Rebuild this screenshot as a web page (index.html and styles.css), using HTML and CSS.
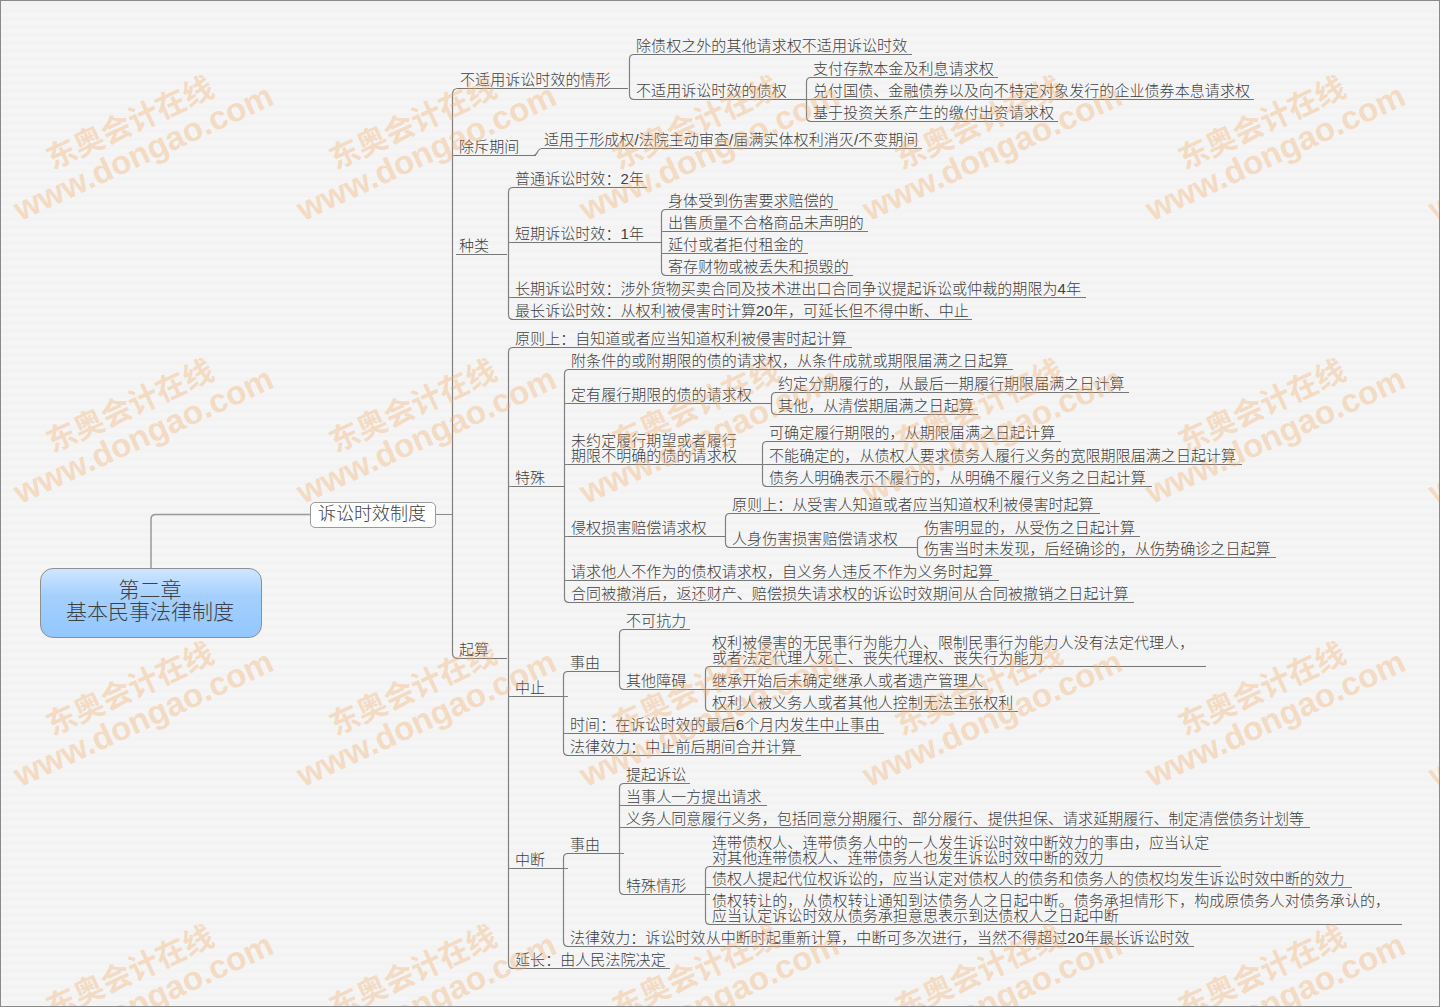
FILE: index.html
```html
<!DOCTYPE html>
<html lang="zh-CN">
<head>
<meta charset="utf-8">
<title>第二章 基本民事法律制度</title>
<link rel="stylesheet" href="styles.css">
</head>
<body>
<main class="canvas">
<svg class="links" width="1440" height="1007" viewBox="0 0 1440 1007" aria-hidden="true">
  <path class="trunk" d="M151 569V519Q151 514.500 156 514.500H310"/>
  <path class="thin" d="M436 514.500H452"/>
  <path class="spine" d="M458 88.500Q452.500 88.500 452.500 94V653Q452.500 658.500 458 658.500"/>
  <path class="spine" d="M634 54.500Q629.500 54.500 629.500 59V94.500Q629.500 99.500 634 99.500"/>
  <path class="spine" d="M811 77.500Q806.500 77.500 806.500 82V116.500Q806.500 121.500 811 121.500M806.500 99.500H811"/>
  <path class="spine" d="M452.500 155.500H533Q536 155.500 537.500 152L538 151Q539.500 148.500 542 148.500"/>
  <path class="spine" d="M513 187.500Q508.500 187.500 508.500 192V314.500Q508.500 319.500 513 319.500M508.500 242.500H513M508.500 297.500H513"/>
  <path class="spine" d="M666 209.500Q661.500 209.500 661.500 214V270.500Q661.500 275.500 666 275.500M661.500 231.500H666M661.500 253.500H666"/>
  <path class="spine" d="M513 347.500Q508.500 347.500 508.500 352V963.500Q508.500 968.500 513 968.500M508.500 486.500H513M508.500 696.500H513M508.500 868.500H513"/>
  <path class="spine" d="M569 369.500Q564.500 369.500 564.500 374V597.500Q564.500 602.500 569 602.500M564.500 403.500H569M564.500 464.500H569M564.500 536.500H569M564.500 580.500H569"/>
  <path class="spine" d="M776 392.500Q771.500 392.500 771.500 397V409.500Q771.500 414.500 776 414.500"/>
  <path class="spine" d="M767 441.500Q762.500 441.500 762.500 446V481.500Q762.500 486.500 767 486.500M762.500 464.500H767"/>
  <path class="spine" d="M730 513.500Q725.500 513.500 725.500 518V542.500Q725.500 547.500 730 547.500"/>
  <path class="spine" d="M922 536.500Q917.500 536.500 917.500 541V552.500Q917.500 557.500 922 557.500"/>
  <path class="spine" d="M568 671.500Q563.500 671.500 563.500 676V750.500Q563.500 755.500 568 755.500M563.500 696.500H568M563.500 733.500H568"/>
  <path class="spine" d="M624 629.500Q619.500 629.500 619.500 634V684.500Q619.500 689.500 624 689.500"/>
  <path class="spine" d="M710 666.500Q705.500 666.500 705.500 671V706.500Q705.500 711.500 710 711.500M705.500 689.500H710"/>
  <path class="spine" d="M568 853.500Q563.500 853.500 563.500 858V941.500Q563.500 946.500 568 946.500M563.500 868.500H568"/>
  <path class="spine" d="M624 783.500Q619.500 783.500 619.500 788V889.500Q619.500 894.500 624 894.500M619.500 805.500H624M619.500 827.500H624M619.500 853.500H624"/>
  <path class="spine" d="M710 866.500Q705.500 866.500 705.500 871V919.500Q705.500 924.500 710 924.500M705.500 887.500H710M705.500 894.500H710"/>
</svg>

<div class="root">第二章<br>基本民事法律制度</div>
<div class="topic">诉讼时效制度</div>

<div class="node" style="left:457px;top:89px;width:171px">不适用诉讼时效的情形</div>
<div class="node" style="left:633px;top:55px;width:279px">除债权之外的其他请求权不适用诉讼时效</div>
<div class="node" style="left:633px;top:100px;width:173px">不适用诉讼时效的债权</div>
<div class="node" style="left:810px;top:78px;width:188px">支付存款本金及利息请求权</div>
<div class="node" style="left:810px;top:100px;width:444px">兑付国债、金融债券以及向不特定对象发行的企业债券本息请求权</div>
<div class="node" style="left:810px;top:122px;width:248px">基于投资关系产生的缴付出资请求权</div>

<div class="node" style="left:456px;top:156px;width:80px">除斥期间</div>
<div class="node" style="left:541px;top:149px;width:381px">适用于形成权/法院主动审查/届满实体权利消灭/不变期间</div>

<div class="node" style="left:456px;top:255px;width:51px">种类</div>
<div class="node" style="left:512px;top:188px;width:135px">普通诉讼时效：2年</div>
<div class="node" style="left:512px;top:243px;width:149px">短期诉讼时效：1年</div>
<div class="node" style="left:665px;top:210px;width:173px">身体受到伤害要求赔偿的</div>
<div class="node" style="left:665px;top:232px;width:203px">出售质量不合格商品未声明的</div>
<div class="node" style="left:665px;top:254px;width:143px">延付或者拒付租金的</div>
<div class="node" style="left:665px;top:276px;width:188px">寄存财物或被丢失和损毁的</div>
<div class="node" style="left:512px;top:298px;width:574px">长期诉讼时效：涉外货物买卖合同及技术进出口合同争议提起诉讼或仲裁的期限为4年</div>
<div class="node" style="left:512px;top:320px;width:460px">最长诉讼时效：从权利被侵害时计算20年，可延长但不得中断、中止</div>

<div class="node" style="left:456px;top:659px;width:51px">起算</div>
<div class="node" style="left:512px;top:348px;width:340px">原则上：自知道或者应当知道权利被侵害时起计算</div>
<div class="node" style="left:512px;top:487px;width:52px">特殊</div>
<div class="node" style="left:568px;top:370px;width:445px">附条件的或附期限的债的请求权，从条件成就或期限届满之日起算</div>
<div class="node" style="left:568px;top:404px;width:203px">定有履行期限的债的请求权</div>
<div class="node" style="left:775px;top:393px;width:354px">约定分期履行的，从最后一期履行期限届满之日计算</div>
<div class="node" style="left:775px;top:415px;width:203px">其他，从清偿期届满之日起算</div>
<div class="node" style="left:568px;top:465px;width:194px">未约定履行期望或者履行<br>期限不明确的债的请求权</div>
<div class="node" style="left:766px;top:442px;width:295px">可确定履行期限的，从期限届满之日起计算</div>
<div class="node" style="left:766px;top:465px;width:476px">不能确定的，从债权人要求债务人履行义务的宽限期限届满之日起计算</div>
<div class="node" style="left:766px;top:487px;width:386px">债务人明确表示不履行的，从明确不履行义务之日起计算</div>
<div class="node" style="left:568px;top:537px;width:157px">侵权损害赔偿请求权</div>
<div class="node" style="left:729px;top:514px;width:371px">原则上：从受害人知道或者应当知道权利被侵害时起算</div>
<div class="node" style="left:729px;top:548px;width:188px">人身伤害损害赔偿请求权</div>
<div class="node" style="left:921px;top:537px;width:219px">伤害明显的，从受伤之日起计算</div>
<div class="node" style="left:921px;top:558px;width:355px">伤害当时未发现，后经确诊的，从伤势确诊之日起算</div>
<div class="node" style="left:568px;top:581px;width:431px">请求他人不作为的债权请求权，自义务人违反不作为义务时起算</div>
<div class="node" style="left:568px;top:603px;width:566px">合同被撤消后，返还财产、赔偿损失请求权的诉讼时效期间从合同被撤销之日起计算</div>

<div class="node" style="left:512px;top:697px;width:51px">中止</div>
<div class="node" style="left:567px;top:672px;width:52px">事由</div>
<div class="node" style="left:623px;top:630px;width:67px">不可抗力</div>
<div class="node" style="left:623px;top:690px;width:82px">其他障碍</div>
<div class="node" style="left:709px;top:667px;width:497px">权利被侵害的无民事行为能力人、限制民事行为能力人没有法定代理人，<br>或者法定代理人死亡、丧失代理权、丧失行为能力</div>
<div class="node" style="left:709px;top:690px;width:279px">继承开始后未确定继承人或者遗产管理人</div>
<div class="node" style="left:709px;top:712px;width:309px">权利人被义务人或者其他人控制无法主张权利</div>
<div class="node" style="left:567px;top:734px;width:317px">时间：在诉讼时效的最后6个月内发生中止事由</div>
<div class="node" style="left:567px;top:756px;width:234px">法律效力：中止前后期间合并计算</div>

<div class="node" style="left:512px;top:869px;width:51px">中断</div>
<div class="node" style="left:567px;top:854px;width:52px">事由</div>
<div class="node" style="left:623px;top:784px;width:67px">提起诉讼</div>
<div class="node" style="left:623px;top:806px;width:144px">当事人一方提出请求</div>
<div class="node" style="left:623px;top:828px;width:687px">义务人同意履行义务，包括同意分期履行、部分履行、提供担保、请求延期履行、制定清偿债务计划等</div>
<div class="node" style="left:623px;top:895px;width:82px">特殊情形</div>
<div class="node" style="left:709px;top:867px;width:512px">连带债权人、连带债务人中的一人发生诉讼时效中断效力的事由，应当认定<br>对其他连带债权人、连带债务人也发生诉讼时效中断的效力</div>
<div class="node" style="left:709px;top:888px;width:643px">债权人提起代位权诉讼的，应当认定对债权人的债务和债务人的债权均发生诉讼时效中断的效力</div>
<div class="node" style="left:709px;top:925px;width:693px">债权转让的，从债权转让通知到达债务人之日起中断。债务承担情形下，构成原债务人对债务承认的，<br>应当认定诉讼时效从债务承担意思表示到达债权人之日起中断</div>
<div class="node" style="left:567px;top:947px;width:627px">法律效力：诉讼时效从中断时起重新计算，中断可多次进行，当然不得超过20年最长诉讼时效</div>
<div class="node" style="left:512px;top:969px;width:158px">延长：由人民法院决定</div>

<div class="marks" aria-hidden="true">
  <div class="mark"><span class="mark-cn">东奥会计在线</span><span class="mark-en">www.dongao.com</span></div>
  <div class="mark"><span class="mark-cn">东奥会计在线</span><span class="mark-en">www.dongao.com</span></div>
  <div class="mark"><span class="mark-cn">东奥会计在线</span><span class="mark-en">www.dongao.com</span></div>
  <div class="mark"><span class="mark-cn">东奥会计在线</span><span class="mark-en">www.dongao.com</span></div>
  <div class="mark"><span class="mark-cn">东奥会计在线</span><span class="mark-en">www.dongao.com</span></div>
  <div class="mark"><span class="mark-cn">东奥会计在线</span><span class="mark-en">www.dongao.com</span></div>
  <div class="mark"><span class="mark-cn">东奥会计在线</span><span class="mark-en">www.dongao.com</span></div>
  <div class="mark"><span class="mark-cn">东奥会计在线</span><span class="mark-en">www.dongao.com</span></div>
  <div class="mark"><span class="mark-cn">东奥会计在线</span><span class="mark-en">www.dongao.com</span></div>
  <div class="mark"><span class="mark-cn">东奥会计在线</span><span class="mark-en">www.dongao.com</span></div>
  <div class="mark"><span class="mark-cn">东奥会计在线</span><span class="mark-en">www.dongao.com</span></div>
  <div class="mark"><span class="mark-cn">东奥会计在线</span><span class="mark-en">www.dongao.com</span></div>
  <div class="mark"><span class="mark-cn">东奥会计在线</span><span class="mark-en">www.dongao.com</span></div>
  <div class="mark"><span class="mark-cn">东奥会计在线</span><span class="mark-en">www.dongao.com</span></div>
  <div class="mark"><span class="mark-cn">东奥会计在线</span><span class="mark-en">www.dongao.com</span></div>
  <div class="mark"><span class="mark-cn">东奥会计在线</span><span class="mark-en">www.dongao.com</span></div>
  <div class="mark"><span class="mark-cn">东奥会计在线</span><span class="mark-en">www.dongao.com</span></div>
  <div class="mark"><span class="mark-cn">东奥会计在线</span><span class="mark-en">www.dongao.com</span></div>
  <div class="mark"><span class="mark-cn">东奥会计在线</span><span class="mark-en">www.dongao.com</span></div>
  <div class="mark"><span class="mark-cn">东奥会计在线</span><span class="mark-en">www.dongao.com</span></div>
  <div class="mark"><span class="mark-cn">东奥会计在线</span><span class="mark-en">www.dongao.com</span></div>
  <div class="mark"><span class="mark-cn">东奥会计在线</span><span class="mark-en">www.dongao.com</span></div>
  <div class="mark"><span class="mark-cn">东奥会计在线</span><span class="mark-en">www.dongao.com</span></div>
  <div class="mark"><span class="mark-cn">东奥会计在线</span><span class="mark-en">www.dongao.com</span></div>
</div>
</main>
</body>
</html>
```
FILE: styles.css
```css
html, body {
  margin: 0;
  padding: 0;
  height: 100%;
  overflow: hidden;
}

.canvas {
  position: relative;
  width: 1440px;
  height: 1007px;
  box-sizing: border-box;
  overflow: hidden;
  background: repeating-linear-gradient(#f3f3f3 0 4px, #f5f5f5 4px 8px);
  border: 1px solid #8a8a8a;
  font-family: "Liberation Sans", "Noto Sans CJK SC", sans-serif;
  font-weight: 300;
  color: #404040;
}

.links {
  position: absolute;
  left: -1px;
  top: -1px;
  fill: none;
}

.spine {
  stroke: #808080;
  stroke-width: 1.2;
  fill: none;
}

.trunk {
  stroke: #999;
  stroke-width: 1.5;
  fill: none;
}

.thin {
  stroke: #8a8a8a;
  stroke-width: 1;
}

.root {
  position: absolute;
  left: 39px;
  top: 567px;
  width: 222px;
  height: 70px;
  box-sizing: border-box;
  padding: 10px 2px 0 0;
  border: 1px solid #8f8f8f;
  border-radius: 13px;
  background: linear-gradient(#cfe6ff 0%, #a5d0fd 40%, #92c7fe 100%);
  font-size: 21px;
  line-height: 22px;
  text-align: center;
}

.topic {
  position: absolute;
  left: 309px;
  top: 501px;
  width: 126px;
  height: 26px;
  box-sizing: border-box;
  padding-right: 2px;
  border: 1px solid #9a9a9a;
  border-radius: 5px;
  background: #fff;
  font-size: 18px;
  line-height: 22px;
  text-align: center;
}

.node {
  position: absolute;
  box-sizing: border-box;
  margin: -1px 0 0 -1px;
  transform: translateY(-100%);
  padding: 0 0 1px 3px;
  border-bottom: 1px solid #777;
  font-size: 15px;
  line-height: 15px;
  letter-spacing: 0.07px;
  white-space: nowrap;
}

.marks {
  position: absolute;
  left: -6px;
  top: -5px;
  display: grid;
  grid-template-columns: repeat(6, 283px);
  grid-auto-rows: 283px;
  pointer-events: none;
}

.mark {
  display: flex;
  flex-direction: column;
  align-items: center;
  justify-content: center;
  transform: rotate(-24.7deg);
  font-family: "Liberation Sans", "Noto Sans CJK SC", sans-serif;
  font-weight: 700;
  color: rgba(243, 172, 105, 0.36);
  white-space: nowrap;
}

.mark-cn {
  font-size: 30px;
  line-height: 31px;
}

.mark-en {
  font-size: 33px;
  line-height: 33px;
}
```
